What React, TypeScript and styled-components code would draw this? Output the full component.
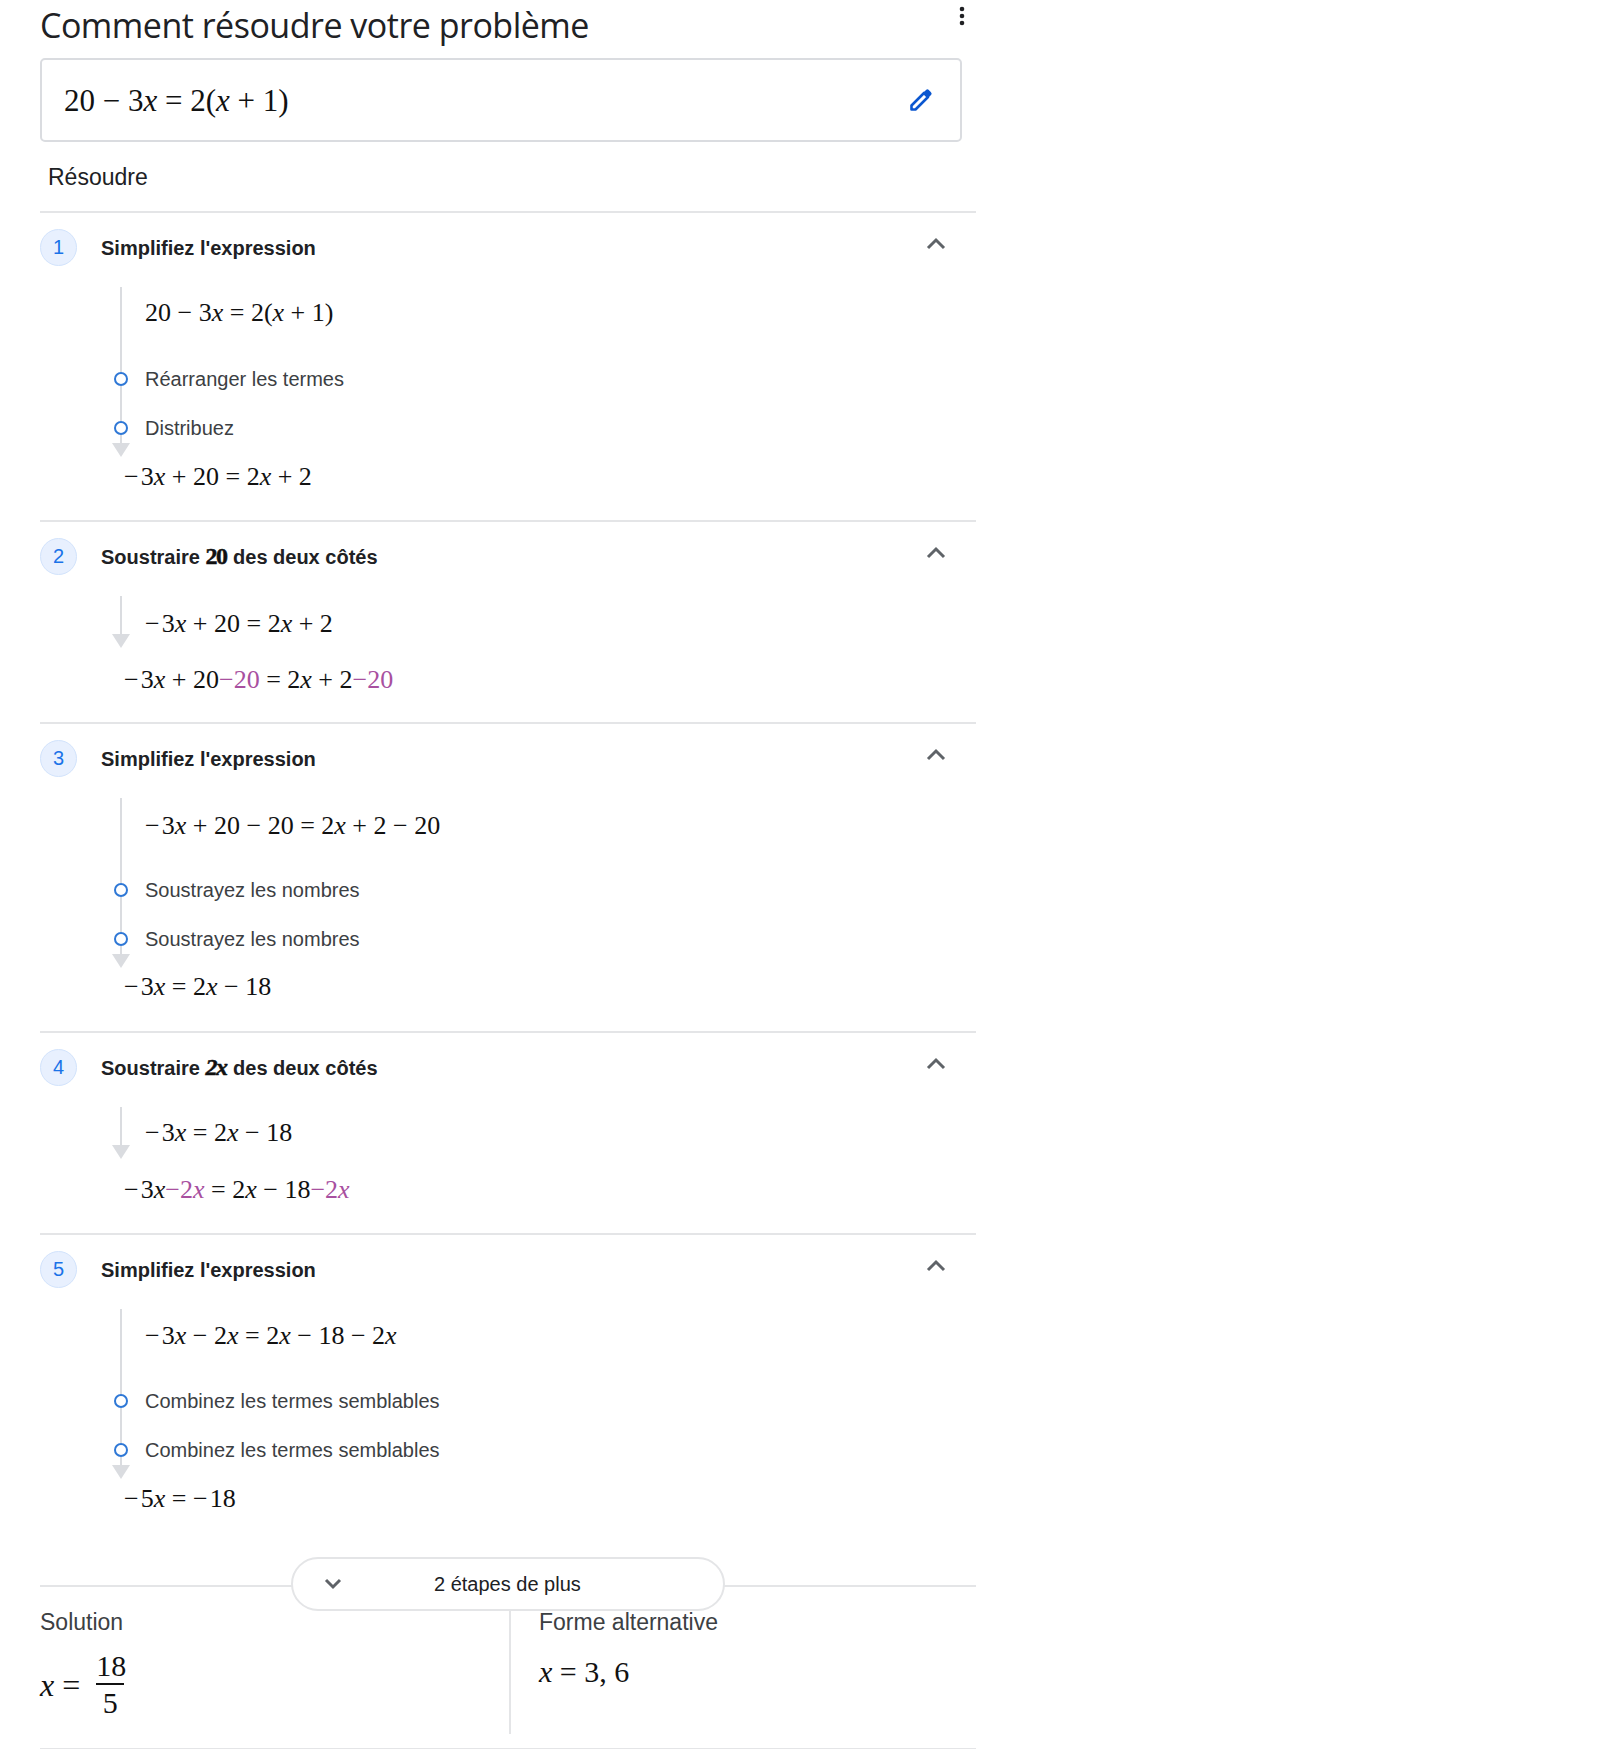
import React from "react";
import styled, { createGlobalStyle } from "styled-components";

const Global = createGlobalStyle`
  html, body { margin: 0; padding: 0; background: #fff; }
  body { font-family: "Liberation Sans", Arial, sans-serif; color: #202124; }
`;

const Page = styled.div`
  width: 936px;
  margin-left: 40px;
  height: 1749px;
`;
const TitleRow = styled.div`
  display: flex;
  justify-content: space-between;
  width: 922px;
  height: 58px;
`;
const Title = styled.h1`
  margin: 0;
  font: 400 34px/50px "Open Sans", "Roboto", sans-serif;
  letter-spacing: -0.5px;
  color: #202124;
`;
const Kebab = styled.svg`
  width: 8px;
  height: 22px;
  margin: 5px -4px 0 0;
  fill: #202124;
`;
const InputCard = styled.div`
  width: 922px;
  height: 84px;
  box-sizing: border-box;
  border: 2px solid #dadce0;
  border-radius: 5px;
  display: flex;
  align-items: center;
  justify-content: space-between;
  padding: 0 27px 0 22px;
`;
const CardMath = styled.div`
  margin-top: 1px;
`;
const Pencil = styled.svg`
  width: 24px;
  height: 24px;
  margin-top: -1px;
`;
const Section = styled.div`
  font-size: 23px;
  line-height: 34px;
  padding: 18px 0 17px 8px;
  color: #202124;
`;
const Step = styled.section<{ $h: number }>`
  border-top: 2px solid #e4e5e7;
  height: ${(p) => p.$h}px;
  box-sizing: border-box;
`;
const Head = styled.header`
  display: flex;
  align-items: center;
  height: 70px;
  padding-bottom: 4px;
`;
const Num = styled.span`
  width: 37px;
  height: 37px;
  margin-bottom: 2px;
  box-sizing: border-box;
  border-radius: 50%;
  background: #e8f0fe;
  border: 1px solid #d2e3fc;
  color: #1a73e8;
  font-size: 20px;
  display: flex;
  align-items: center;
  justify-content: center;
`;
const HeadText = styled.h2`
  margin: 0 0 0 24px;
  font-size: 20px;
  line-height: 24px;
  font-weight: 700;
  color: #202124;
  flex: 1;
`;
const Chevron = styled.svg`
  width: 22px;
  height: 14px;
  margin: -10px 29px 0 0;
  fill: none;
  stroke: #5f6368;
  stroke-width: 3;
`;
const Row = styled.div<{ $h: number }>`
  display: flex;
  height: ${(p) => p.$h}px;
  margin-left: 72px;
`;
const RailCell = styled.div`
  width: 18px;
  display: flex;
  flex-direction: column;
  align-items: center;
  flex: none;
`;
const Line = styled.div<{ $h: number }>`
  width: 2px;
  height: ${(p) => p.$h}px;
  background: #dadce0;
  flex: none;
`;
const Dot = styled.div`
  width: 14px;
  height: 14px;
  box-sizing: border-box;
  border: 2px solid #2f78d6;
  border-radius: 50%;
  background: #fff;
  flex: none;
`;
const Arrow = styled.div`
  width: 0;
  height: 0;
  border-left: 9px solid transparent;
  border-right: 9px solid transparent;
  border-top: 14px solid #dadce0;
  flex: none;
`;
const RowContent = styled.div<{ $top: number }>`
  margin-left: 15px;
  padding-top: ${(p) => p.$top}px;
`;
const Caption = styled.div`
  font-size: 20px;
  line-height: 24px;
  color: #3c4043;
`;
const MathText = styled.span<{ $size: number }>`
  font-family: "Liberation Serif", "Times New Roman", serif;
  font-size: ${(p) => p.$size}px;
  line-height: 40px;
  color: #111;
  white-space: nowrap;
  display: inline-block;
`;
const Var = styled.i``;
const Op = styled.span<{ $unary?: boolean }>`
  margin: 0 ${(p) => (p.$unary ? "0.08em 0 0" : "0.25em")};
`;
const Tint = styled.span`
  color: #a8509f;
`;
const Result = styled.div<{ $top?: number }>`
  margin: ${(p) => p.$top ?? 0}px 0 0 84px;
  height: 38px;
`;
const BoldMath = styled.span`
  font-family: "Liberation Serif", serif;
  font-size: 24px;
  line-height: 20px;
  font-weight: 700;
  letter-spacing: -1.5px;
  -webkit-text-stroke: 0.5px #111;
  color: #111;
  margin-right: 1px;
`;

/* Renders a formula string: digits upright, x italic, operators spaced. */
const Tokens: React.FC<{ s: string }> = ({ s }) => {
  const parts = s.split(/(x|−|\+|=)/).filter(Boolean);
  return (
    <>
      {parts.map((p, i) => {
        if (p === "x") return <Var key={i}>x</Var>;
        if (p === "−" || p === "+" || p === "=") {
          const unary = i === 0 || parts[i - 1] === "=";
          return <Op key={i} $unary={unary}>{p}</Op>;
        }
        return <span key={i}>{p}</span>;
      })}
    </>
  );
};
const TintOp: React.FC<{ s: string }> = ({ s }) => (
  <Tint>−<Tokens s={s} /></Tint>
);

const M: React.FC<{ size?: number; children: React.ReactNode }> = ({ size = 26, children }) => (
  <MathText $size={size}>{children}</MathText>
);

const Header: React.FC<{ n: number; children: React.ReactNode }> = ({ n, children }) => (
  <Head>
    <Num>{n}</Num>
    <HeadText>{children}</HeadText>
    <Chevron viewBox="0 0 22 14"><path d="M3 12 11 4l8 8" /></Chevron>
  </Head>
);

const LongStep: React.FC<{ n: number; h: number; first: string; firstTop: number; a: string; b: string; last: string; lastTop?: number }> = ({ n, h, first, firstTop, a, b, last, lastTop }) => (
  <Step $h={h}>
    <Header n={n}>Simplifiez l'expression</Header>
    <Row $h={69}>
      <RailCell><Line $h={69} /></RailCell>
      <RowContent $top={firstTop}><M><Tokens s={first} /></M></RowContent>
    </Row>
    <Row $h={48}>
      <RailCell><Line $h={16} /><Dot /><Line $h={18} /></RailCell>
      <RowContent $top={11}><Caption>{a}</Caption></RowContent>
    </Row>
    <Row $h={53}>
      <RailCell><Line $h={17} /><Dot /><Line $h={8} /><Arrow /></RailCell>
      <RowContent $top={12}><Caption>{b}</Caption></RowContent>
    </Row>
    <Result $top={lastTop}><M><Tokens s={last} /></M></Result>
  </Step>
);

const ShortStep: React.FC<{ n: number; h: number; term: React.ReactNode; first: string; firstTop: number; lastTop: number; children: React.ReactNode }> = ({ n, h, term, first, firstTop, lastTop, children }) => (
  <Step $h={h}>
    <Header n={n}>Soustraire <BoldMath>{term}</BoldMath> des deux côtés</Header>
    <Row $h={53}>
      <RailCell><Line $h={38} /><Arrow /></RailCell>
      <RowContent $top={firstTop}><M><Tokens s={first} /></M></RowContent>
    </Row>
    <Result $top={lastTop}><M>{children}</M></Result>
  </Step>
);

const Footer = styled.div`
  border-top: 2px solid #e4e5e7;
  position: relative;
  margin-top: 69px;
  display: grid;
  grid-template-columns: 469px 1fr;
  height: 161px;
  border-bottom: 2px solid #e4e5e7;
`;
const MoreButton = styled.button`
  position: absolute;
  left: 251px;
  top: -30px;
  width: 434px;
  height: 54px;
  box-sizing: border-box;
  background: #fff;
  border: 2px solid #e4e5e7;
  border-radius: 27px;
  display: flex;
  align-items: center;
  font: 400 20px "Liberation Sans", sans-serif;
  color: #202124;
  padding: 0 0 0 30px;
`;
const MoreChevron = styled.svg`
  width: 20px;
  height: 14px;
  fill: none;
  stroke: #5f6368;
  stroke-width: 3;
`;
const MoreLabel = styled.span`
  margin-left: 91px;
  padding-top: 1px;
`;
const Cell = styled.div<{ $divided?: boolean }>`
  padding-top: 20px;
  ${(p) => p.$divided && "border-left: 2px solid #e4e5e7; padding-left: 28px; margin-bottom: 14px;"}
`;
const Label = styled.div`
  font-size: 23px;
  line-height: 30px;
  color: #3c4043;
`;
const MathLine = styled.div<{ $top: number }>`
  display: flex;
  align-items: center;
  margin-top: ${(p) => p.$top}px;
`;
const Fraction = styled.span`
  display: inline-flex;
  flex-direction: column;
  align-items: center;
  font-family: "Liberation Serif", serif;
  font-size: 30px;
  line-height: 36px;
  color: #111;
  margin-left: 8px;
`;
const Numerator = styled.span`
  border-bottom: 2px solid #111;
  line-height: 34px;
  width: 28px;
  text-align: center;
`;

export default function App() {
  return (
    <Page>
      <Global />
      <TitleRow>
        <Title>Comment résoudre votre problème</Title>
        <Kebab viewBox="0 0 8 22">
          <circle cx="4" cy="4" r="2.3" />
          <circle cx="4" cy="11" r="2.3" />
          <circle cx="4" cy="18" r="2.3" />
        </Kebab>
      </TitleRow>
      <InputCard>
        <CardMath><M size={31}><Tokens s="20−3x=2(x+1)" /></M></CardMath>
        <Pencil viewBox="0 0 24 24">
          <path d="M2.5 21.5V17.5L15 5l4 4L6.5 21.5z" fill="none" stroke="#0b57d0" strokeWidth="2.6" strokeLinejoin="round" />
          <path d="M14 5l3-3a2 2 0 0 1 2.8 0l2.2 2.2a2 2 0 0 1 0 2.8l-3 3z" fill="#0b57d0" />
        </Pencil>
      </InputCard>
      <Section>Résoudre</Section>

      <LongStep n={1} h={309} first="20−3x=2(x+1)" firstTop={6} a="Réarranger les termes" b="Distribuez" last="−3x+20=2x+2" />
      <ShortStep n={2} h={202} term="20" first="−3x+20=2x+2" firstTop={8} lastTop={11}>
        <Tokens s="−3x+20" /><TintOp s="20" /><Op>=</Op><Tokens s="2x+2" /><TintOp s="20" />
      </ShortStep>
      <LongStep n={3} h={309} first="−3x+20−20=2x+2−20" firstTop={8} a="Soustrayez les nombres" b="Soustrayez les nombres" last="−3x=2x−18" lastTop={-1} />
      <ShortStep n={4} h={202} term={<Var>2x</Var>} first="−3x=2x−18" firstTop={6} lastTop={10}>
        <Tokens s="−3x" /><TintOp s="2x" /><Op>=</Op><Tokens s="2x−18" /><TintOp s="2x" />
      </ShortStep>
      <LongStep n={5} h={283} first="−3x−2x=2x−18−2x" firstTop={7} a="Combinez les termes semblables" b="Combinez les termes semblables" last="−5x=−18" />

      <Footer>
        <MoreButton type="button">
          <MoreChevron viewBox="0 0 20 14"><path d="M3 3l7 7 7-7" /></MoreChevron>
          <MoreLabel>2 étapes de plus</MoreLabel>
        </MoreButton>
        <Cell>
          <Label>Solution</Label>
          <MathLine $top={12}>
            <M size={32}><Var>x</Var><Op>=</Op></M>
            <Fraction><Numerator>18</Numerator><span>5</span></Fraction>
          </MathLine>
        </Cell>
        <Cell $divided>
          <Label>Forme alternative</Label>
          <MathLine $top={15}>
            <M size={30}><Var>x</Var><Op>=</Op>3, 6</M>
          </MathLine>
        </Cell>
      </Footer>
    </Page>
  );
}
